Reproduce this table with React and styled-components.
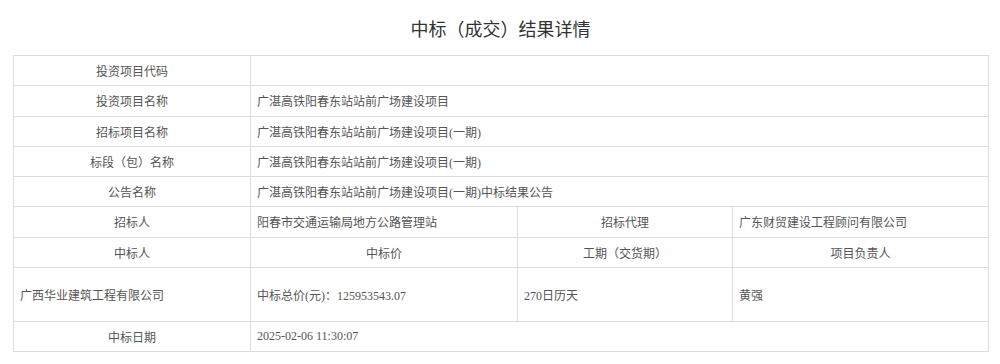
import React from "react";
import styled, { createGlobalStyle } from "styled-components";

const GlobalStyle = createGlobalStyle`
  html, body {
    margin: 0;
    padding: 0;
    background: #fff;
  }
  body {
    font-family: "Liberation Serif", "Noto Sans CJK SC", serif;
  }
`;

const Page = styled.div`
  width: 1000px;
  padding: 0 12px 0 13px;
  box-sizing: border-box;
`;

const Title = styled.h2`
  margin: 0;
  padding-top: 19px;
  padding-bottom: 14px;
  height: 22px;
  line-height: 22px;
  font-size: 18px;
  font-weight: normal;
  text-align: center;
  color: #333;
`;

const Table = styled.table`
  width: 975px;
  border-collapse: collapse;
  table-layout: fixed;
  font-size: 12px;
  color: #555;
`;

const Row = styled.tr`
  height: ${(p) => p.$h || 30}px;
`;

const Cell = styled.td`
  border: 1px solid #dcdcdc;
  padding: 0 6px;
  text-align: ${(p) => (p.$center ? "center" : "left")};
  vertical-align: middle;
  white-space: nowrap;
`;

const cols = [237, 267, 215, 256];

const fullRows = [
  ["投资项目代码", ""],
  ["投资项目名称", "广湛高铁阳春东站站前广场建设项目"],
  ["招标项目名称", "广湛高铁阳春东站站前广场建设项目(一期)"],
  ["标段（包）名称", "广湛高铁阳春东站站前广场建设项目(一期)"],
  ["公告名称", "广湛高铁阳春东站站前广场建设项目(一期)中标结果公告"],
];

export default function App() {
  return (
    <Page>
      <GlobalStyle />
      <Title>中标（成交）结果详情</Title>
      <Table>
        <colgroup>
          {cols.map((w, i) => (
            <col key={i} style={{ width: w }} />
          ))}
        </colgroup>
        <tbody>
          {fullRows.map(([label, value]) => (
            <Row key={label} $h={label === "投资项目名称" ? 31 : 30}>
              <Cell $center>{label}</Cell>
              <Cell colSpan={3}>{value}</Cell>
            </Row>
          ))}
          <Row $h={31}>
            <Cell $center>招标人</Cell>
            <Cell>阳春市交通运输局地方公路管理站</Cell>
            <Cell $center>招标代理</Cell>
            <Cell>广东财贸建设工程顾问有限公司</Cell>
          </Row>
          <Row $h={30}>
            <Cell $center>中标人</Cell>
            <Cell $center>中标价</Cell>
            <Cell $center>工期（交货期）</Cell>
            <Cell $center>项目负责人</Cell>
          </Row>
          <Row $h={54}>
            <Cell>广西华业建筑工程有限公司</Cell>
            <Cell>中标总价(元)：125953543.07</Cell>
            <Cell>270日历天</Cell>
            <Cell>黄强</Cell>
          </Row>
          <Row $h={30}>
            <Cell $center>中标日期</Cell>
            <Cell colSpan={3}>2025-02-06 11:30:07</Cell>
          </Row>
        </tbody>
      </Table>
    </Page>
  );
}
